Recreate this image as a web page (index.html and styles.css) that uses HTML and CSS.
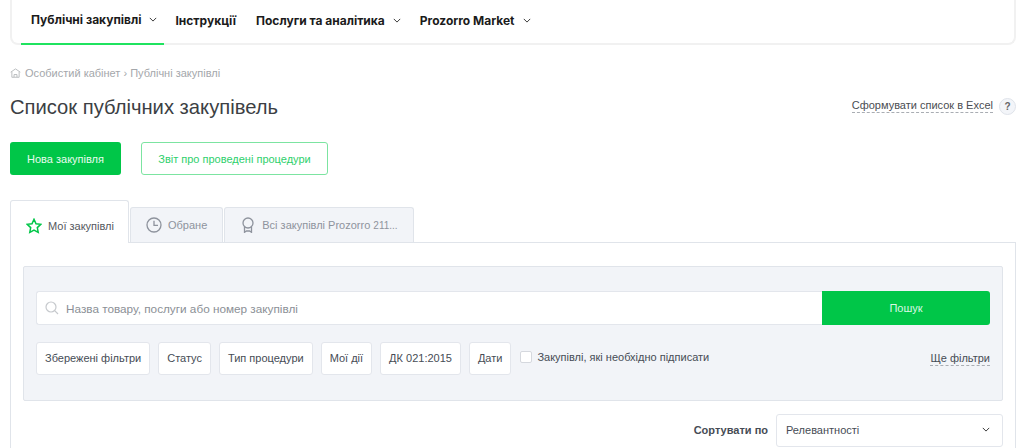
FILE: index.html
```html
<!DOCTYPE html>
<html lang="uk">
<head>
  <meta charset="UTF-8" />
  <title>Список публічних закупівель</title>
  <link rel="stylesheet" href="styles.css">
</head>
<body>

  <nav class="topnav">
    <a class="nav-item active">Публічні закупівлі <svg class="caret" viewBox="0 0 10 6"><path d="M1 1l4 4 4-4"/></svg></a>
    <a class="nav-item plain">Інструкції</a>
    <a class="nav-item">Послуги та аналітика <svg class="caret" viewBox="0 0 10 6"><path d="M1 1l4 4 4-4"/></svg></a>
    <a class="nav-item">Prozorro Market <svg class="caret" viewBox="0 0 10 6"><path d="M1 1l4 4 4-4"/></svg></a>
  </nav>

  <div class="breadcrumb">
    <svg class="home" viewBox="0 0 12 11"><path d="M.7 4.6L6 1l5.3 3.6M2 4.200v6h8v-6M4.400 10V7.200h3.200V10"/></svg>
    Особистий кабінет › Публічні закупівлі
  </div>

  <div class="title-row">
    <h1>Список публічних закупівель</h1>
    <div class="excel">
      <a class="dashed">Сформувати список в Excel</a>
      <span class="help">?</span>
    </div>
  </div>

  <div class="actions">
    <button class="btn btn-green">Нова закупівля</button>
    <button class="btn btn-outline">Звіт про проведені процедури</button>
  </div>

  <div class="tabs">
    <div class="tab active">
      <svg class="tab-icon" viewBox="0 0 16 16"><path class="star" d="M8 1.300l2 4.400 4.800.6-3.500 3.300.9 4.800L8 12.100l-4.200 2.300.9-4.800L1.200 6.300l4.800-.6z"/></svg>
      Мої закупівлі
    </div>
    <div class="tab">
      <svg class="tab-icon" viewBox="0 0 16 16"><circle cx="8" cy="8" r="7"/><path d="M8 3.800V8.300h4"/></svg>
      Обране
    </div>
    <div class="tab">
      <svg class="tab-icon" viewBox="0 0 16 16"><circle cx="8" cy="6" r="5"/><path d="M4.500 10v5.300l2-1.300h3l2 1.300V10"/></svg>
      <span>Всі закупівлі Prozorro <span class="count">211...</span></span>
    </div>
  </div>

  <div class="tab-body">
    <div class="search-box">
      <div class="search-row">
        <div class="search-input">
          <svg class="search-icon" viewBox="0 0 14 14"><circle cx="6" cy="6" r="5"/><path d="M9.700 9.700L13 13"/></svg>
          Назва товару, послуги або номер закупівлі
        </div>
        <button class="search-btn">Пошук</button>
      </div>
      <div class="filters">
        <span class="chip">Збережені фільтри</span>
        <span class="chip">Статус</span>
        <span class="chip">Тип процедури</span>
        <span class="chip">Мої дії</span>
        <span class="chip">ДК 021:2015</span>
        <span class="chip">Дати</span>
        <label class="check"><span class="checkbox"></span>Закупівлі, які необхідно підписати</label>
        <a class="dashed more">Ще фільтри</a>
      </div>
    </div>

    <div class="sort-row">
      <span class="sort-label">Сортувати по</span>
      <div class="select">
        Релевантності
        <svg class="caret" viewBox="0 0 10 6"><path d="M1 1l4 4 4-4"/></svg>
      </div>
    </div>
  </div>

</body>
</html>
```

FILE: styles.css
```css
html, body {
  height: 448px;
  overflow: hidden;
}

body {
  margin: 0;
  padding: 0 8px 0 10px;
  font-family: "Liberation Sans", Arial, sans-serif;
  font-size: 11px;
  color: #464c55;
  background: #fff;
}

.topnav {
  display: flex;
  height: 45px;
  padding-left: 9px;
  box-sizing: border-box;
  border: 2px solid #f1f1f1;
  border-top: 0;
  border-radius: 0 0 8px 8px;
  font-family: Inter, sans-serif;
  font-size: 12px;
  font-weight: 700;
  color: #1b1b1b;
}

.nav-item {
  display: flex;
  align-items: center;
  gap: 8px;
  height: 45px;
  padding: 0 8px 4px 10px;
  margin-right: 1px;
  box-sizing: border-box;
  white-space: nowrap;
}

.nav-item.active {
  padding-right: 7px;
  border-bottom: 2px solid #1fe35f;
}

.nav-item.plain {
  padding-right: 9px;
}

.caret {
  width: 8px;
  height: 5px;
  fill: none;
  stroke: #333;
  stroke-width: 1.2;
}

.breadcrumb {
  display: flex;
  align-items: center;
  gap: 4px;
  margin-top: 21px;
  height: 14px;
  color: #a4a7ab;
}

.home {
  width: 11px;
  height: 10px;
  fill: none;
  stroke: #b5b8bb;
  stroke-width: 1;
}

.title-row {
  display: flex;
  justify-content: space-between;
  align-items: center;
  margin-top: 14px;
  height: 26px;
}

h1 {
  margin: 0;
  font-size: 20.2px;
  font-weight: 400;
  color: #3c3f44;
}

.excel {
  display: flex;
  align-items: center;
  gap: 6px;
  margin-bottom: 2px;
  color: #4a4d52;
}

.dashed {
  border-bottom: 1px dashed #a9adb3;
  line-height: 13px;
}

.help {
  width: 15px;
  height: 15px;
  border: 1px solid #dfe3ea;
  border-radius: 50%;
  background: #f3f5f9;
  text-align: center;
  line-height: 15px;
  font-size: 10px;
  font-weight: 700;
  color: #666;
}

.actions {
  display: flex;
  gap: 20px;
  margin-top: 22px;
}

.btn {
  height: 33px;
  border-radius: 3px;
  font-family: inherit;
  font-size: 11px;
}

.btn-green {
  width: 111px;
  border: 0;
  background: #00c648;
  color: #e8fbef;
}

.btn-outline {
  width: 187px;
  border: 1px solid #7ce4a1;
  background: #fff;
  color: #2ed06c;
}

.tabs {
  display: flex;
  align-items: flex-end;
  margin-top: 25px;
  height: 42px;
}

.tab {
  display: flex;
  align-items: center;
  gap: 6px;
  height: 35px;
  padding: 0 15px;
  margin-right: 1px;
  box-sizing: border-box;
  border: 1px solid #e0e4ea;
  border-bottom: 0;
  border-radius: 3px 3px 0 0;
  background: #f2f4f8;
  color: #8e939d;
  white-space: nowrap;
}

.tab.active {
  height: 43px;
  padding: 7px 14px 0 15px;
  margin-bottom: -1px;
  position: relative;
  background: #fff;
  color: #55585e;
}

.count {
  font-size: 10px;
}

.tab-icon {
  width: 16px;
  height: 16px;
  fill: none;
  stroke: #8e939d;
  stroke-width: 1.300;
}

.star {
  stroke: #00c648;
  stroke-width: 1.500;
}

.tab-body {
  height: 206px;
  padding: 23px 12px 0;
  box-sizing: border-box;
  border: 1px solid #e0e4ea;
  border-bottom: 0;
}

.search-box {
  height: 135px;
  padding: 24px 12px 0;
  box-sizing: border-box;
  border: 1px solid #e0e4ea;
  border-radius: 2px;
  background: #f2f4f8;
}

.search-row {
  display: flex;
  height: 34px;
}

.search-input {
  flex: 1;
  display: flex;
  align-items: center;
  gap: 7px;
  padding-left: 8px;
  border: 1px solid #e3e6ec;
  border-right: 0;
  border-radius: 3px 0 0 3px;
  background: #fff;
  color: #8b8f96;
  font-size: 11.75px;
}

.search-icon {
  width: 14px;
  height: 14px;
  fill: none;
  stroke: #c6c9cd;
  stroke-width: 1.200;
}

.search-btn {
  width: 168px;
  border: 0;
  border-radius: 0 3px 3px 0;
  background: #00c648;
  color: #d9f7e4;
  font-family: inherit;
  font-size: 11px;
}

.filters {
  display: flex;
  align-items: center;
  gap: 8px;
  margin-top: 17px;
}

.chip {
  height: 31px;
  padding: 0 8px;
  border: 1px solid #e3e6ec;
  border-radius: 3px;
  background: #fff;
  line-height: 31px;
  white-space: nowrap;
}

.check {
  display: flex;
  align-items: center;
  gap: 5px;
  margin: -4px 0 0 1px;
}

.checkbox {
  width: 10px;
  height: 10px;
  border: 1px solid #d5d8de;
  border-radius: 2px;
  background: #fff;
}

.more {
  margin-left: auto;
}

.sort-row {
  display: flex;
  justify-content: flex-end;
  align-items: center;
  gap: 8px;
  margin-top: 13px;
}

.sort-label {
  padding-bottom: 2px;
  font-weight: 700;
}

.select {
  display: flex;
  justify-content: space-between;
  align-items: center;
  width: 227px;
  height: 33px;
  padding: 0 12px 2px 9px;
  box-sizing: border-box;
  border: 1px solid #e3e6ec;
  border-radius: 3px;
  background: #fff;
}
```
